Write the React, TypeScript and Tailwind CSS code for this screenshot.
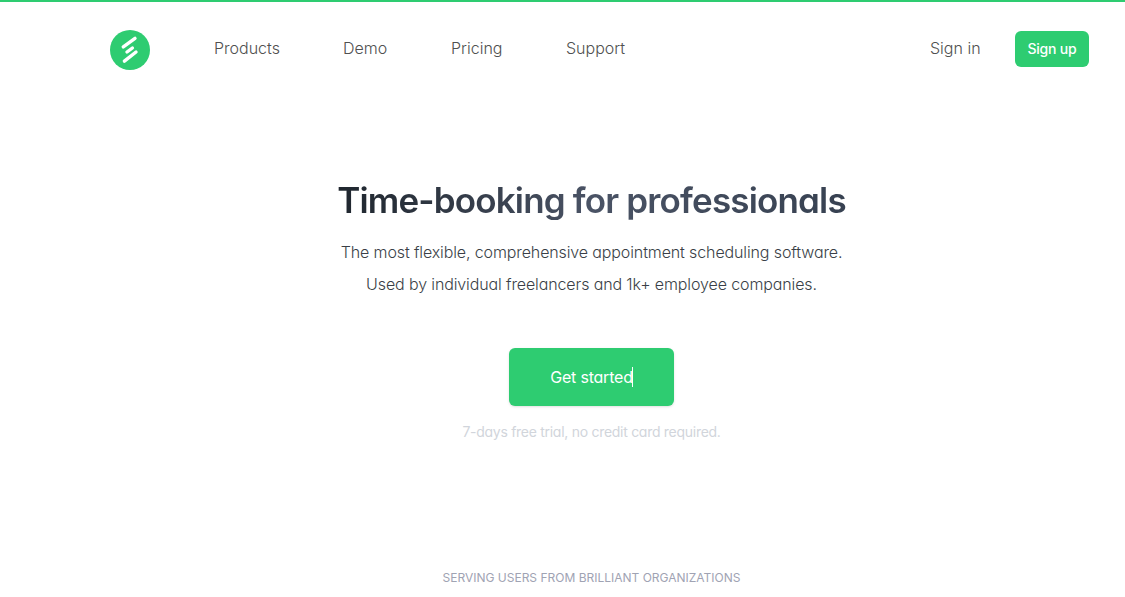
import React from 'react';

const NAV_ITEMS = [
  { label: 'Products', width: 'w-[65px]' },
  { label: 'Demo', width: 'w-[44px]' },
  { label: 'Pricing', width: 'w-[51px]' },
  { label: 'Support', width: 'w-[60px]' },
];

const Logo: React.FC = () => (
  <svg width="40" height="40" viewBox="0 0 40 40" className="mt-0.5 shrink-0">
    <circle cx="20" cy="20" r="20" fill="#2ecc71" />
    <g stroke="#fff" strokeWidth="3.4" strokeLinecap="round">
      <path d="M13.3 16.9 L25 8.4" />
      <path d="M17 22 L22.4 18" />
      <path d="M14.4 31.2 L26 22" />
    </g>
  </svg>
);

const Header: React.FC = () => (
  <header className="flex h-24 items-center border-t-2 border-[#2ecc71] pl-[110px] pr-9">
    <Logo />
    <nav className="ml-16 flex gap-16 pb-0.5 text-base leading-6 font-light text-[#505050]">
      {NAV_ITEMS.map((item) => (
        <a key={item.label} href="#" className={`whitespace-nowrap ${item.width}`}>
          {item.label}
        </a>
      ))}
    </nav>
    <a href="#" className="ml-auto mr-[35px] w-[50px] pb-0.5 whitespace-nowrap text-base font-light text-[#505050]">
      Sign in
    </a>
    <a
      href="#"
      className="flex h-9 w-[74px] items-center justify-center rounded-md bg-[#2ecc71] text-sm font-medium tracking-[-0.2px] text-white"
    >
      Sign up
    </a>
  </header>
);

const Hero: React.FC = () => (
  <section className="flex flex-col items-center pl-[58px] pt-[84px] text-center">
    <h1 className="bg-linear-to-r from-[#1f262e] via-[#4a5365] to-[#374151] bg-clip-text text-[35px] leading-10 font-semibold tracking-[-0.83px] whitespace-nowrap text-transparent">
      Time-booking for professionals
    </h1>
    <p className="mt-4 text-base leading-8 font-light tracking-[-0.12px] whitespace-nowrap text-[#3a3f47]">
      The most flexible, comprehensive appointment scheduling software.
      <br />
      Used by individual freelancers and 1k+ employee companies.
    </p>
    {/* Call to action with a text caret after the label */}
    <a
      href="#"
      className="mt-12 flex h-[58px] w-[165px] items-center justify-center rounded-md bg-[#2ecc71] text-base tracking-[-0.2px] text-white shadow-sm"
    >
      Get started
      <span className="-ml-px h-5 w-px bg-white" />
    </a>
    <p className="mt-4 text-sm leading-5 tracking-[-0.28px] text-[#d1d5db]">7-days free trial, no credit card required.</p>
    <p className="mt-32 text-xs leading-4 whitespace-nowrap text-[#a0a3b3]">SERVING USERS FROM BRILLIANT ORGANIZATIONS</p>
  </section>
);

export default function App() {
  return (
    <div className="h-[597px] overflow-hidden bg-white font-['Inter',sans-serif] [font-feature-settings:'cv11']">
      <Header />
      <Hero />
    </div>
  );
}
